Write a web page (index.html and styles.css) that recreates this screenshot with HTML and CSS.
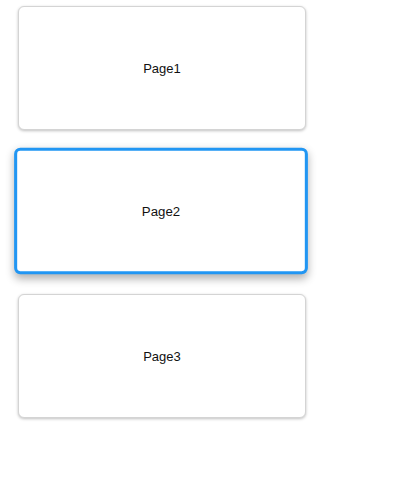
FILE: index.html
```html
<!DOCTYPE html>
<html>
  <head>
    <meta charset="UTF-8" />
    <title>Pages</title>
    <link rel="stylesheet" href="styles.css">
  </head>
  <body>
    <div class="page-list">
      <div class="page-card">Page1</div>
      <div class="page-card active">Page2</div>
      <div class="page-card">Page3</div>
    </div>
  </body>
</html>
```
FILE: styles.css
```css
body {
  margin: 0;
  font-family: 'Liberation Sans', Arial, sans-serif;
  font-size: 13px;
  color: #111;
  background: #fff;
}

.page-list {
  display: flex;
  flex-direction: column;
  gap: 20px;
  padding: 6px 18px;
}

.page-card {
  box-sizing: border-box;
  width: 288px;
  height: 124px;
  display: flex;
  justify-content: center;
  align-items: center;
  border: 1px solid #d4d4d4;
  border-radius: 6px;
  background: #fff;
  box-shadow: 0 1px 3px rgba(0, 0, 0, 0.25);
}

.page-card.active {
  border: 3px solid #2196f3;
  transform: translate(-1px, -1px) scale(1.02);
  box-shadow: 0 4px 8px rgba(0, 0, 0, 0.3);
}
```
